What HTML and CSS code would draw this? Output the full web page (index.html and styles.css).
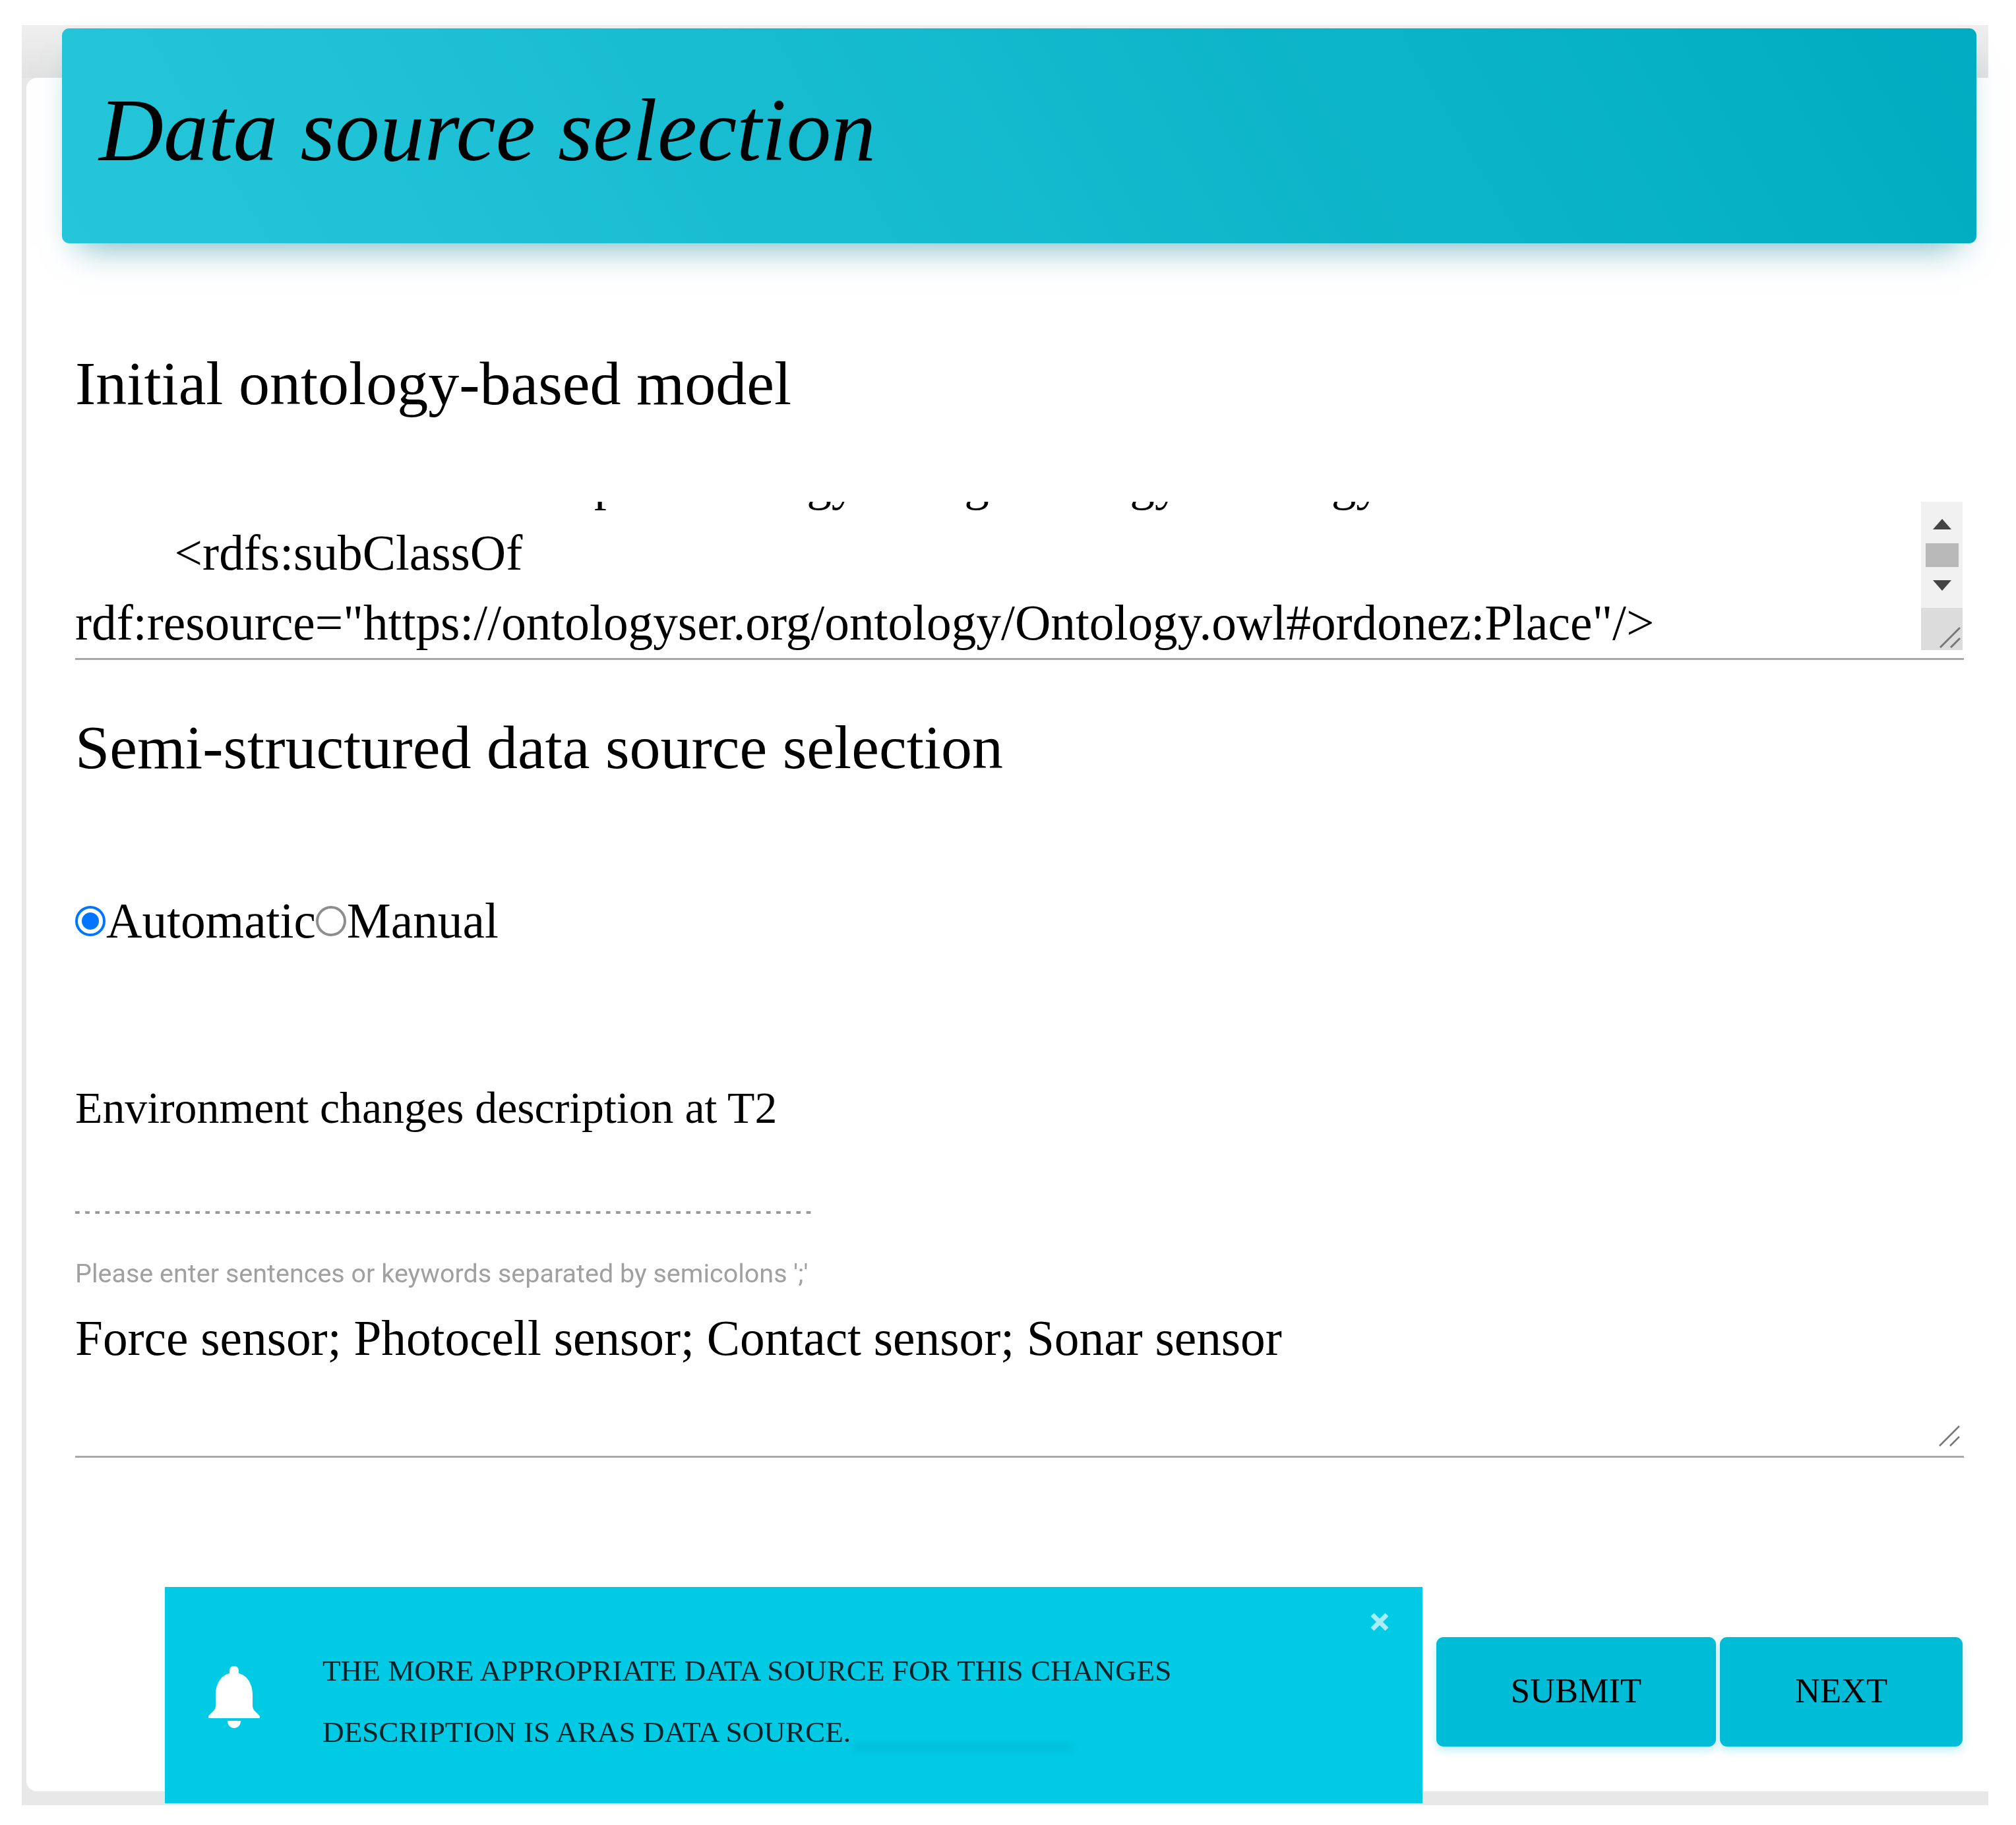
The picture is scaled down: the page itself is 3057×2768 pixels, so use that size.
FILE: index.html
```html
<!DOCTYPE html>
<html lang="en">
<head>
    <meta charset="utf-8">
    <title>Data source selection</title>
    <link rel="stylesheet" href="styles.css">
</head>
<body>
    <article class="frame">
        <div class="card">
            <header class="card-header">
                <h1>Data source selection</h1>
            </header>

            <h2 class="section-title first">Initial ontology-based model</h2>
            <div class="model-view">
                <div class="model-text">
                    <div class="model-line">&lt;owl:Class rdf:about="https://ontologyser.org/ontology/Ontology.owl#ordonez:Room"&gt;</div>
                    <div class="model-line">	&lt;rdfs:subClassOf</div>
                    <div class="model-line">rdf:resource="https://ontologyser.org/ontology/Ontology.owl#ordonez:Place"/&gt;</div>
                </div>
                <div class="scroll-col">
                    <div class="scroll-track">
                        <svg class="scroll-arrow" viewBox="0 0 28 16"><path d="M14 0 28 16H0Z"/></svg>
                        <div class="scroll-thumb"></div>
                        <svg class="scroll-arrow" viewBox="0 0 28 16"><path d="M0 0H28L14 16Z"/></svg>
                    </div>
                    <div class="scroll-corner">
                        <svg class="grip" viewBox="0 0 32 32"><path d="M1 31 31 1M17 31 31 17"/></svg>
                    </div>
                </div>
            </div>

            <h2 class="section-title second">Semi-structured data source selection</h2>
            <div class="radio-row">
                <input type="radio" name="mode" id="mode-auto" checked>
                <label for="mode-auto">Automatic</label>
                <input type="radio" name="mode" id="mode-manual">
                <label for="mode-manual">Manual</label>
            </div>

            <h3 class="field-title">Environment changes description at T2</h3>
            <div class="dotted-rule"></div>
            <p class="hint">Please enter sentences or keywords separated by semicolons ';'</p>
            <div class="keywords">
                Force sensor; Photocell sensor; Contact sensor; Sonar sensor
                <svg class="grip corner" viewBox="0 0 32 32"><path d="M1 31 31 1M17 31 31 17"/></svg>
            </div>

            <div class="actions">
                <button class="btn btn-submit" type="button">SUBMIT</button>
                <button class="btn btn-next" type="button">NEXT</button>
            </div>
        </div>

        <aside class="alert">
            <svg class="bell" viewBox="0 0 78 94"><path d="M39 0C34 0 32 3 32 8V11C19 14 11 27 11 44V60C11 68 4 70 0 76V79H78V76C74 70 67 68 67 60V44C67 27 59 14 46 11V8C46 3 44 0 39 0ZM29 83H49C49 90 44 94 39 94 34 94 29 90 29 83Z"/></svg>
            <p class="alert-text">THE MORE APPROPRIATE DATA SOURCE FOR THIS CHANGES DESCRIPTION IS ARAS DATA SOURCE.<span class="alert-smear"></span></p>
            <svg class="alert-close" viewBox="0 0 28 28"><path d="M3 3 25 25M25 3 3 25"/></svg>
        </aside>
    </article>
</body>
</html>
```
FILE: styles.css
```css
html, body {
    margin: 0;
    background: #fff;
}
body {
    font-family: "Liberation Serif", "Times New Roman", serif;
    color: #000;
}

.frame {
    position: relative;
    width: 2982px;
    margin: 38px 0 0 33px;
    padding: 80px 0 21px 7px;
    box-sizing: border-box;
    background: linear-gradient(#efefef, #e2e2e2 80px, #e8e8e8 80px);
    filter: blur(.7px);
}
.card {
    display: flow-root;
    padding: 0 37px 68px 74px;
    background: #fff;
    border-radius: 16px 0 0 16px;
}

.card-header {
    height: 326px;
    box-sizing: border-box;
    margin: -75px -19px 0 -20px;
    padding: 87px 0 0 56px;
    border-radius: 11px;
    background: linear-gradient(60deg, #26c6da, #00acc1);
    box-shadow: 0 30px 50px -25px rgba(0, 120, 140, .55);
}
.card-header h1 {
    margin: 0;
    font-size: 135.7px;
    line-height: 135px;
    font-weight: 400;
    font-style: italic;
}

.section-title {
    margin: 0;
    font-size: 94px;
    line-height: 116px;
    font-weight: 400;
}
.section-title.first {
    margin-top: 154px;
}
.section-title.second {
    margin-top: 74px;
}

.model-view {
    display: flex;
    justify-content: space-between;
    height: 237px;
    margin-top: 122px;
    border-bottom: 3px solid #a8a8a8;
    overflow: hidden;
}
.model-text {
    display: flex;
    flex-direction: column;
    justify-content: flex-end;
    flex: 1;
    min-width: 0;
    font-size: 75.3px;
    line-height: 106px;
    white-space: pre;
}

.scroll-col {
    flex: none;
    width: 63px;
    margin-right: 2px;
}
.scroll-track {
    display: flex;
    flex-direction: column;
    align-items: center;
    height: 161px;
    padding: 26px 0;
    box-sizing: border-box;
    justify-content: space-between;
    background: #f1f1f1;
}
.scroll-arrow {
    width: 28px;
    height: 16px;
    fill: #444;
}
.scroll-thumb {
    width: 50px;
    height: 36px;
    background: #b9b9b9;
}
.scroll-corner {
    position: relative;
    height: 64px;
    background: #dcdcdc;
}
.grip {
    position: absolute;
    right: 3px;
    bottom: 3px;
    width: 32px;
    height: 32px;
    fill: none;
    stroke: #777;
    stroke-width: 3;
}

.radio-row {
    display: flex;
    align-items: center;
    margin-top: 153px;
    font-size: 75.3px;
    line-height: 106px;
}
.radio-row input {
    appearance: none;
    flex: none;
    width: 46px;
    height: 46px;
    box-sizing: border-box;
    margin: 0 1px 0 0;
    border: 4px solid #8d8d8d;
    border-radius: 50%;
}
.radio-row input:checked {
    border-color: #0075ff;
    background: radial-gradient(circle, #0075ff 12.5px, #fff 13.5px);
}

.field-title {
    margin: 184px 0 0;
    font-size: 67.8px;
    line-height: 94px;
    font-weight: 400;
}
.dotted-rule {
    width: 1121px;
    height: 4px;
    margin-top: 109px;
    background: linear-gradient(90deg, #999 7px, transparent 7px) 0 0 / 15.2px 4px repeat-x;
}
.hint {
    margin: 67px 0 0;
    font-family: Roboto, sans-serif;
    font-size: 39.5px;
    line-height: 48px;
    color: #a0a0a0;
}
.keywords {
    position: relative;
    height: 231px;
    margin-top: 21px;
    border-bottom: 3px solid #a8a8a8;
    font-size: 75.3px;
    line-height: 106px;
}
.grip.corner {
    right: 6px;
    bottom: 14px;
    stroke-width: 2.5;
}

.actions {
    display: flex;
    justify-content: flex-end;
    gap: 6px;
    margin: 272px 2px 0 0;
}
.btn {
    height: 166px;
    padding: 0 0 4px;
    border: 0;
    border-radius: 11px;
    background: #00bcd6;
    box-shadow: 0 6px 14px rgba(0, 188, 212, .25);
    font-family: inherit;
    font-size: 52.5px;
    color: #000;
}
.btn-submit {
    width: 424px;
}
.btn-next {
    width: 368px;
}

.alert {
    position: absolute;
    left: 217px;
    bottom: 3px;
    display: flex;
    align-items: center;
    width: 1907px;
    height: 328px;
    box-sizing: border-box;
    padding-left: 66px;
    background: #00cae4;
}
.bell {
    flex: none;
    width: 78px;
    height: 94px;
    margin-top: 6px;
    fill: #fff;
}
.alert-text {
    position: relative;
    width: 1340px;
    margin: 20px 0 0 95px;
    font-size: 45.2px;
    line-height: 93px;
    color: #02232a;
}
.alert-smear {
    position: absolute;
    left: 805px;
    bottom: 22px;
    width: 330px;
    height: 4px;
    background: rgba(0, 90, 110, .3);
    filter: blur(6px);
}
.alert-close {
    position: absolute;
    top: 39px;
    right: 51px;
    width: 28px;
    height: 28px;
    fill: none;
    stroke: #a9ecf6;
    stroke-width: 7;
}
```
